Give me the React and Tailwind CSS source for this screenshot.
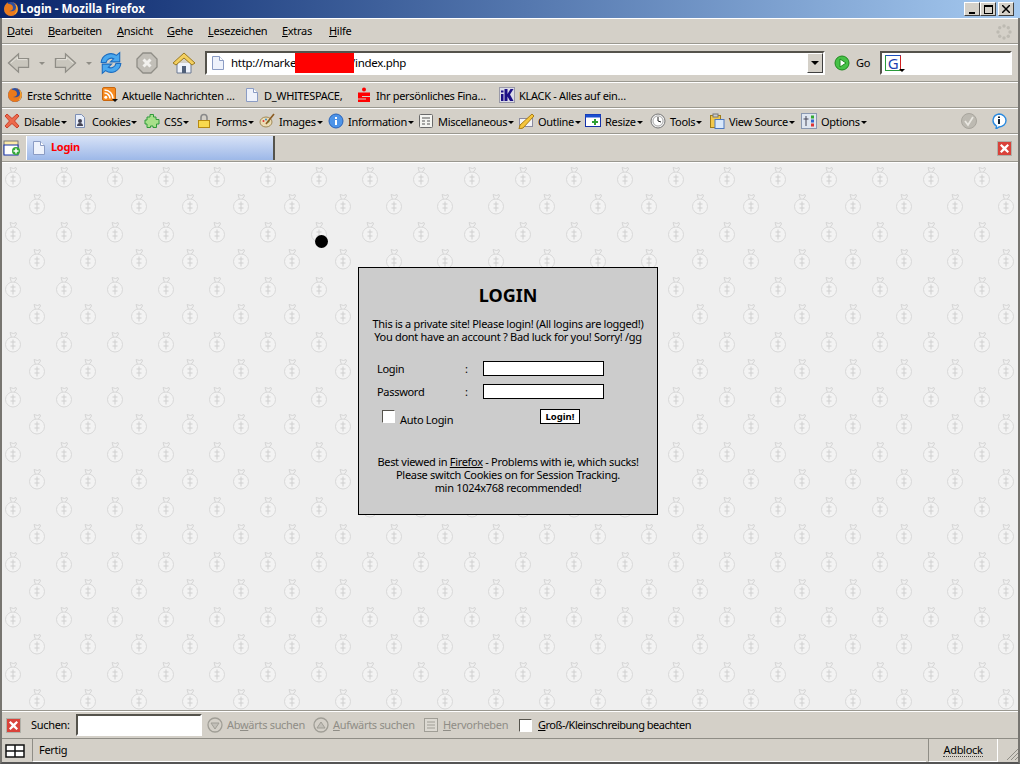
import React from 'react';

const font = { fontFamily: '"Noto Sans", "Open Sans", sans-serif' };

function Doc({ className = 'w-4 h-4' }) {
    return (
        <svg viewBox="0 0 16 16" className={className}>
            <path d="M2.500 1.500h7l4 4v9h-11z" fill="#eef2fb" stroke="#8b9cc4" />
            <path d="M9.500 1.500v4h4" fill="#fff" stroke="#8b9cc4" />
        </svg>
    );
}

function Firefox({ className = 'w-4 h-4' }) {
    return (
        <svg viewBox="0 0 16 16" className={className}>
            <circle cx="8" cy="8" r="7" fill="#2f4f9e" />
            <path d="M8 1a7 7 0 1 1-7 7c0-2 1-3 1-4 1 0 1-2 3-3-1 1 0 2 1 2 2 0 4 1 4 4 0 2-2 3-4 3 3 1 7 0 7-4 0-3-3-5-5-5z" fill="#ea7a1c" />
            <path d="M13 4c1 2 2 6-1 9" stroke="#f6b73c" fill="none" />
        </svg>
    );
}

function Rss() {
    return (
        <svg viewBox="0 0 16 16" className="w-4 h-4">
            <rect x="0.500" y="0.500" width="13" height="13" rx="1.500" fill="#f58a1f" stroke="#c9660d" />
            <circle cx="3.800" cy="10.200" r="1.500" fill="#fff" />
            <path d="M2.500 6a5.500 5.500 0 0 1 5.500 5.500M2.500 3a8.500 8.500 0 0 1 8.500 8.500" stroke="#fff" strokeWidth="1.600" fill="none" />
            <path d="M10 12h6l-3 3z" fill="#111" />
        </svg>
    );
}

function Sparkasse() {
    return (
        <svg viewBox="0 0 16 16" className="w-4 h-4">
            <circle cx="8" cy="2.500" r="2" fill="#f00" />
            <path d="M2 5.500h12v3.500H6v1h8v5H2v-2.500h8v-1H2z" fill="#f00" />
        </svg>
    );
}

function Klack() {
    return (
        <svg viewBox="0 0 16 16" className="w-4 h-4">
            <rect x="0.500" y="0.500" width="15" height="15" fill="#dcdce8" stroke="#9a9aa8" />
            <path d="M5.500 2h3v5l3-5h3l-3.500 5.500L14.500 14h-3.500L8.500 9.500V14h-3zM2 7h2.500v7H2zM2 3.500h2.500v2H2z" fill="#1c0f86" />
        </svg>
    );
}

function RedX({ className = 'w-4 h-4' }) {
    return (
        <svg viewBox="0 0 16 16" className={className}>
            <path d="M3 1l5 4.500L13 1l2 2-4.500 5L15 13l-2 2-5-4.500L3 15l-2-2 4.500-5L1 3z" fill="#ec6a4c" stroke="#c9402a" />
        </svg>
    );
}

function CloseBox() {
    return (
        <svg viewBox="0 0 15 15" className="w-[15px] h-[15px]">
            <rect x="0.500" y="0.500" width="14" height="14" fill="#d9423a" stroke="#b0b0a8" />
            <path d="M4.500 3l3 2.800L10.500 3 12 4.500 9.200 7.500 12 10.500 10.500 12 7.500 9.200 4.500 12 3 10.500 5.800 7.500 3 4.500z" fill="#fff" />
        </svg>
    );
}

const devIcons = {
    cookies: (
        <svg viewBox="0 0 16 16" className="w-4 h-4">
            <path d="M3.500 1.500h6l3 3v10h-9z" fill="#e8eefa" stroke="#7d8fb5" />
            <circle cx="8" cy="8" r="2" fill="#445" />
            <path d="M5 13c0-2 1-3 3-3s3 1 3 3z" fill="#445" />
        </svg>
    ),
    css: (
        <svg viewBox="0 0 16 16" className="w-4 h-4">
            <path d="M6 1.500h3.500v2.500H12v2.500h3V11h-2.500v3.500H9V13H6.500v1.500H3V11H1V7h2V4h3z" fill="#a8e08a" stroke="#2f9a3a" />
        </svg>
    ),
    forms: (
        <svg viewBox="0 0 16 16" className="w-4 h-4">
            <path d="M5 8V4.500a3 3 0 0 1 6 0V8" fill="none" stroke="#8a8a8a" strokeWidth="1.600" />
            <rect x="2.500" y="7.500" width="11" height="7" fill="#f9d94e" stroke="#b78a12" />
        </svg>
    ),
    images: (
        <svg viewBox="0 0 16 16" className="w-4 h-4">
            <ellipse cx="7" cy="9" rx="6" ry="5" fill="#ecdcb4" stroke="#a08a58" />
            <circle cx="4.500" cy="8" r="1" fill="#d33" />
            <circle cx="7" cy="6.500" r="1" fill="#38c" />
            <circle cx="9.500" cy="8.500" r="1" fill="#3a3" />
            <path d="M15 1L7 11" stroke="#8a5a20" strokeWidth="1.600" />
        </svg>
    ),
    info: (
        <svg viewBox="0 0 16 16" className="w-4 h-4">
            <circle cx="8" cy="8" r="7" fill="#4d94e8" stroke="#2a63b8" />
            <rect x="7" y="7" width="2" height="5" fill="#fff" />
            <rect x="7" y="4" width="2" height="2" fill="#fff" />
        </svg>
    ),
    misc: (
        <svg viewBox="0 0 16 16" className="w-4 h-4">
            <rect x="1.500" y="1.500" width="13" height="13" rx="1" fill="#f4f4f0" stroke="#6a6a6a" />
            <path d="M4 5h8M4 8h3M9 8h3M4 11h3M9 11h3" stroke="#555" />
        </svg>
    ),
    outline: (
        <svg viewBox="0 0 16 16" className="w-4 h-4">
            <rect x="1.500" y="5.500" width="13" height="8" fill="#f3f3f6" stroke="#8a8aa0" />
            <path d="M14 1l2 2-11 12-4 1 1-4z" fill="#f5c53c" stroke="#a87c14" />
        </svg>
    ),
    resize: (
        <svg viewBox="0 0 16 16" className="w-4 h-4">
            <rect x="0.500" y="1.500" width="15" height="12" fill="#fff" stroke="#1530a8" />
            <rect x="0.500" y="1.500" width="15" height="3" fill="#1a4fd0" />
            <path d="M9 6h2v2h2v2h-2v2H9v-2H7V8h2z" fill="#30a030" />
        </svg>
    ),
    tools: (
        <svg viewBox="0 0 16 16" className="w-4 h-4">
            <circle cx="8" cy="8" r="7" fill="#eeeeee" stroke="#777" />
            <circle cx="8" cy="8" r="5" fill="#fff" stroke="#aaa" />
            <path d="M8 4v4l3 1" stroke="#222" fill="none" />
        </svg>
    ),
    source: (
        <svg viewBox="0 0 16 16" className="w-4 h-4">
            <rect x="1.500" y="2.500" width="10" height="12" fill="#f2c84a" stroke="#a07c18" />
            <rect x="4" y="1" width="5" height="3" fill="#ccc" stroke="#777" />
            <rect x="6" y="6.500" width="9" height="9" fill="#d8e8fb" stroke="#4c78c0" />
        </svg>
    ),
    options: (
        <svg viewBox="0 0 16 16" className="w-4 h-4">
            <rect x="0.500" y="0.500" width="15" height="15" fill="#dfe6f0" stroke="#8a98b0" />
            <path d="M5 3v10M2.500 6h5" stroke="#445" />
            <rect x="10" y="2.500" width="3" height="3" fill="#3a3" />
            <rect x="10" y="6.500" width="3" height="3" fill="#36c" />
            <rect x="10" y="10.500" width="3" height="3" fill="#d33" />
        </svg>
    ),
};

const menus = [
    ['D', 'atei', 'w-[41px]'],
    ['B', 'earbeiten', 'w-[69px]'],
    ['A', 'nsicht', 'w-[50px]'],
    ['G', 'ehe', 'w-[41px]'],
    ['L', 'esezeichen', 'w-[74px]'],
    ['E', 'xtras', 'w-[47px]'],
    ['H', 'ilfe', 'w-[30px]'],
];

const bookmarks = [
    { icon: <Firefox />, label: 'Erste Schritte', width: 'w-[95px]' },
    { icon: <Rss />, label: 'Aktuelle Nachrichten …', width: 'w-[142px]' },
    { icon: <Doc />, label: 'D_WHITESPACE,', width: 'w-[112px]' },
    { icon: <Sparkasse />, label: 'Ihr persönliches Fina…', width: 'w-[143px]' },
    { icon: <Klack />, label: 'KLACK - Alles auf ein…', width: 'w-[150px]' },
];

const devItems = [
    { icon: <RedX />, label: 'Disable', width: 'w-[68px]' },
    { icon: devIcons.cookies, label: 'Cookies', width: 'w-[72px]' },
    { icon: devIcons.css, label: 'CSS', width: 'w-[52px]' },
    { icon: devIcons.forms, label: 'Forms', width: 'w-[63px]' },
    { icon: devIcons.images, label: 'Images', width: 'w-[69px]' },
    { icon: devIcons.info, label: 'Information', width: 'w-[90px]' },
    { icon: devIcons.misc, label: 'Miscellaneous', width: 'w-[100px]' },
    { icon: devIcons.outline, label: 'Outline', width: 'w-[67px]' },
    { icon: devIcons.resize, label: 'Resize', width: 'w-[65px]' },
    { icon: devIcons.tools, label: 'Tools', width: 'w-[59px]' },
    { icon: devIcons.source, label: 'View Source', width: 'w-[92px]' },
    { icon: devIcons.options, label: 'Options', width: 'w-[70px]' },
];

function Caret() {
    return <span className="ml-px mt-[1px] h-0 w-0 border-x-[3px] border-t-[3px] border-x-transparent border-t-black" />;
}

function WinButton({ children, className = '' }) {
    return (
        <div className={`flex h-[14px] w-[16px] items-center justify-center border border-t-white border-l-white border-r-[#404040] border-b-[#404040] bg-[#d4d0c8] ${className}`}>
            {children}
        </div>
    );
}

function Arrow({ flip }) {
    return (
        <svg viewBox="0 0 24 22" className={`h-[22px] w-[23px] ${flip ? '-scale-x-100' : ''}`}>
            <path d="M1.500 11L12 1.500V6.500H22.500V15.500H12V20.500z" fill="#c9c6bd" stroke="#8f8d86" strokeWidth="1.300" />
            <path d="M4 11L11 5v2.500h10" fill="none" stroke="#e6e4dd" />
        </svg>
    );
}

function Sep() {
    return <div className="h-[2px] border-t border-t-[#9a9890] border-b border-b-white" />;
}

function MoneyBags() {
    return (
        <svg className="absolute inset-0 h-full w-full" aria-hidden="true">
            <defs>
                <g id="bag">
                    <path d="M5 1.500l3.500 1 2.500-1 .500 1.500-2.500 3.500h-2.500z" fill="#f0f0f0" stroke="#d4d4d4" />
                    <circle cx="8" cy="13.500" r="7.500" fill="#f3f3f3" stroke="#d8d8d8" />
                    <path d="M8 8.500v10M5.500 11h5M5.500 15h5" stroke="#cfcfcf" />
                </g>
                <pattern id="bags" x="3" y="3" width="51" height="55" patternUnits="userSpaceOnUse">
                    <use href="#bag" x="0" y="0" />
                    <use href="#bag" x="24" y="27" />
                </pattern>
            </defs>
            <rect width="100%" height="100%" fill="url(#bags)" />
        </svg>
    );
}

function LoginBox() {
    return (
        <div className="relative ml-[356px] mt-[104px] h-[248px] w-[300px] border border-black bg-[#cccccc] text-[11px] leading-[13px] text-black">
            <h1 className="mt-[17px] text-center text-[18px] font-bold leading-[20px] tracking-normal">LOGIN</h1>
            <p className="mt-[12px] text-center">
                This is a private site! Please login! (All logins are logged!)
                <br />
                You dont have an account ? Bad luck for you! Sorry! /gg
            </p>
            <div className="mt-[18px] ml-[18px] flex h-[15px] items-center">
                <span className="w-[88px]">Login</span>
                <span className="w-[18px]">:</span>
                <div className="h-[15px] w-[121px] border border-black bg-white" />
            </div>
            <div className="mt-[8px] ml-[18px] flex h-[15px] items-center">
                <span className="w-[88px]">Password</span>
                <span className="w-[18px]">:</span>
                <div className="h-[15px] w-[121px] border border-black bg-white" />
            </div>
            <div className="mt-[10px] ml-[23px] flex h-[15px] items-center">
                <div className="h-[13px] w-[13px] border border-t-[#55534c] border-l-[#55534c] border-r-white border-b-white bg-white" />
                <span className="ml-[5px] mt-[5px] w-[140px]">Auto Login</span>
                <div className="flex h-[15px] w-[40px] items-center justify-center border border-black bg-white text-[9.500px] font-bold tracking-normal">
                    Login!
                </div>
            </div>
            <p className="mt-[31px] text-center">
                Best viewed in <span className="underline">Firefox</span> - Problems with ie, which sucks!
                <br />
                Please switch Cookies on for Session Tracking.
                <br />
                min 1024x768 recommended!
            </p>
        </div>
    );
}

export default function App() {
    return (
        <div style={font} className="flex h-[764px] w-[1020px] flex-col overflow-hidden bg-[#d4d0c8] text-[11px] tracking-[-0.3px] text-black">
            <div className="flex h-[18px] shrink-0 items-center justify-between bg-gradient-to-r from-[#0a246a] to-[#a6caf0] pl-[3px] pr-[6px]">
                <div className="flex items-center">
                    <Firefox />
                    <span className="ml-px text-[11.500px] font-bold tracking-normal text-white">Login - Mozilla Firefox</span>
                </div>
                <div className="flex items-center">
                    <WinButton><span className="mt-[7px] h-[2px] w-[6px] bg-black" /></WinButton>
                    <WinButton className="mr-[2px]"><span className="h-[9px] w-[9px] border border-t-2 border-black" /></WinButton>
                    <WinButton>
                        <svg viewBox="0 0 8 8" className="h-[8px] w-[8px]"><path d="M0 0l8 8M8 0l-8 8" stroke="#000" strokeWidth="1.500" /></svg>
                    </WinButton>
                </div>
            </div>

            <div className="flex min-h-0 flex-1 flex-col border-x-2 border-b-2 border-x-[#777570] border-b-[#555]">
                <div className="h-[2px] shrink-0 border-t border-white" />
                <div className="flex h-[23px] shrink-0 items-center pl-[5px] pr-[6px]">
                    {menus.map(([key, rest, width]) => (
                        <span key={rest} className={width}>
                            <span className="underline">{key}</span>
                            {rest}
                        </span>
                    ))}
                    <svg viewBox="0 0 16 16" className="ml-auto h-4 w-4">
                        <g fill="#bdbab2">
                            <circle cx="8" cy="2" r="1.700" />
                            <circle cx="12.300" cy="3.700" r="1.700" />
                            <circle cx="14" cy="8" r="1.700" />
                            <circle cx="12.300" cy="12.300" r="1.700" />
                            <circle cx="8" cy="14" r="1.700" />
                            <circle cx="3.700" cy="12.300" r="1.700" />
                            <circle cx="2" cy="8" r="1.700" />
                            <circle cx="3.700" cy="3.700" r="1.700" />
                        </g>
                    </svg>
                </div>
                <Sep />

                <div className="flex h-[36px] shrink-0 items-center pl-[5px] pr-[6px]">
                    <Arrow />
                    <span className="ml-[9px] h-0 w-0 border-x-[3px] border-t-[3px] border-x-transparent border-t-[#8f8d86]" />
                    <div className="ml-[9px]"><Arrow flip /></div>
                    <span className="ml-[9px] h-0 w-0 border-x-[3px] border-t-[3px] border-x-transparent border-t-[#8f8d86]" />
                    <svg viewBox="0 0 22 22" className="ml-[7px] h-[24px] w-[24px]">
                        <path d="M2 10.500a9 9 0 0 1 14-6.500l3-2.500v8.500h-8.500l3-3a5 5 0 0 0-7 3.500z" fill="#4aa8ee" stroke="#1b6cc0" />
                        <path d="M20 11.500a9 9 0 0 1-14 6.500l-3 2.500V12h8.500l-3 3a5 5 0 0 0 7-3.500z" fill="#4aa8ee" stroke="#1b6cc0" />
                    </svg>
                    <svg viewBox="0 0 22 22" className="ml-[13px] h-[22px] w-[22px]">
                        <path d="M7 1h8l6 6v8l-6 6H7l-6-6V7z" fill="#c2bfb8" stroke="#8f8d86" strokeWidth="1.300" />
                        <path d="M7.500 7.500l7 7M14.500 7.500l-7 7" stroke="#f2f1ee" strokeWidth="3" />
                    </svg>
                    <svg viewBox="0 0 24 24" className="ml-[14px] h-[24px] w-[24px]">
                        <path d="M5 12v10h14V12" fill="#eef2fa" stroke="#6a7892" />
                        <path d="M10 22v-7h4v7z" fill="#50607a" />
                        <path d="M12 2L1 12l3 2 8-7 8 7 3-2z" fill="#f3cf5f" stroke="#9a7a24" />
                    </svg>
                    <div className="relative ml-[9px] flex h-[24px] w-[620px] items-center border-2 border-t-[#55534c] border-l-[#55534c] border-r-white border-b-white bg-white">
                        <div className="ml-[3px]"><Doc /></div>
                        <span className="ml-[5px] w-[120px] whitespace-nowrap text-[11.500px]">http://market</span>
                        <span className="text-[11.500px]">/index.php</span>
                        <div className="absolute left-[88px] top-0 h-[20px] w-[59px] bg-[#ff0000]" />
                        <div className="absolute right-0 top-0 flex h-[20px] w-[16px] items-center justify-center border border-t-white border-l-white border-r-[#404040] border-b-[#404040] bg-[#d4d0c8]">
                            <span className="h-0 w-0 border-x-[4px] border-t-[4px] border-x-transparent border-t-black" />
                        </div>
                    </div>
                    <svg viewBox="0 0 16 16" className="ml-[9px] h-4 w-4">
                        <circle cx="8" cy="8" r="7" fill="#46c146" stroke="#1e8a1e" />
                        <path d="M6 4l6 4-6 4z" fill="#fff" stroke="#1e8a1e" />
                    </svg>
                    <span className="ml-[6px]">Go</span>
                    <div className="ml-auto flex h-[24px] w-[132px] items-center border-2 border-t-[#55534c] border-l-[#55534c] border-r-white border-b-white bg-white pl-[3px]">
                        <div className="relative flex h-[16px] w-[16px] items-center justify-center border border-t-[#1c4fc0] border-l-[#2a9a3a] border-r-[#d02020] border-b-[#2a9a3a] text-[15px] leading-none text-[#1c3fb0]">
                            G
                            <span className="absolute -right-[5px] bottom-[-2px] h-0 w-0 border-x-[3px] border-t-[3px] border-x-transparent border-t-black" />
                        </div>
                    </div>
                </div>
                <Sep />

                <div className="flex h-[24px] shrink-0 items-center pl-[5px]">
                    {bookmarks.map((item) => (
                        <div key={item.label} className={`flex items-center gap-[4px] ${item.width}`}>
                            {item.icon}
                            <span className="mt-[2px] whitespace-nowrap">{item.label}</span>
                        </div>
                    ))}
                </div>
                <Sep />

                <div className="flex h-[24px] shrink-0 items-center pl-[2px] pr-[11px]">
                    {devItems.map((item) => (
                        <div key={item.label} className={`flex items-center gap-[4px] ${item.width}`}>
                            {item.icon}
                            <span className="mt-[2px] flex items-center whitespace-nowrap">
                                {item.label}
                                <Caret />
                            </span>
                        </div>
                    ))}
                    <svg viewBox="0 0 16 16" className="ml-auto h-4 w-4">
                        <circle cx="8" cy="8" r="7.500" fill="#bdbab2" stroke="#a8a59d" />
                        <path d="M4 8l3 4 5-8" stroke="#e9e7e1" strokeWidth="1.800" fill="none" />
                    </svg>
                    <svg viewBox="0 0 16 16" className="ml-[14px] h-4 w-4">
                        <path d="M8 1a7 6.500 0 0 1 0 13l-3 2 .500-3A7 6.500 0 0 1 8 1z" fill="#fff" stroke="#2a8ae0" strokeWidth="1.400" />
                        <rect x="7" y="6" width="2" height="5" fill="#123" />
                        <rect x="7" y="3.500" width="2" height="1.500" fill="#123" />
                    </svg>
                </div>
                <Sep />

                <div className="flex h-[26px] shrink-0 items-center pr-[6px]">
                    <svg viewBox="0 0 18 18" className="ml-px h-[18px] w-[18px]">
                        <rect x="1" y="2" width="14" height="13" fill="#fbe9a8" stroke="#777" />
                        <rect x="1" y="6" width="14" height="10" fill="#fff" stroke="#1530a8" />
                        <circle cx="13" cy="12" r="4" fill="#35a83a" />
                        <path d="M13 9.500v5M10.500 12h5" stroke="#fff" strokeWidth="1.500" />
                    </svg>
                    <div className="ml-[5px] flex h-[24px] w-[249px] items-center gap-[4px] border-l border-l-white border-r-2 border-r-[#55534c] bg-gradient-to-b from-[#d8e2f6] to-[#9db8e8] pl-[4px] font-bold text-[#ff0000]">
                        <Doc />
                        <span className="mb-[2px]">Login</span>
                    </div>
                    <div className="ml-auto"><CloseBox /></div>
                </div>
                <Sep />

                <main className="relative min-h-0 flex-1 overflow-hidden bg-[#efefef]">
                    <MoneyBags />
                    <div className="absolute left-[313px] top-[72px] h-[13px] w-[13px] rounded-full bg-black" />
                    <div className="relative flex">
                        <LoginBox />
                    </div>
                </main>
                <Sep />

                <div className="flex h-[26px] shrink-0 items-center pl-[4px]">
                    <CloseBox />
                    <span className="ml-[10px] w-[45px]">Suchen:</span>
                    <div className="h-[22px] w-[126px] border-2 border-t-[#55534c] border-l-[#55534c] border-r-white border-b-white bg-white" />
                    <svg viewBox="0 0 16 16" className="ml-[5px] h-4 w-4">
                        <circle cx="8" cy="8" r="7" fill="#d4d0c8" stroke="#a09e96" strokeWidth="1.300" />
                        <path d="M4 6h8l-4 6z" fill="#c2bfb8" stroke="#a09e96" />
                    </svg>
                    <span className="ml-[4px] w-[83px] text-[#8f8d86]">Ab<span className="underline">w</span>ärts suchen</span>
                    <svg viewBox="0 0 16 16" className="ml-[3px] h-4 w-4">
                        <circle cx="8" cy="8" r="7" fill="#d4d0c8" stroke="#a09e96" strokeWidth="1.300" />
                        <path d="M4 11h8L8 5z" fill="#c2bfb8" stroke="#a09e96" />
                    </svg>
                    <span className="ml-[4px] w-[90px] text-[#8f8d86]"><span className="underline">A</span>ufwärts suchen</span>
                    <svg viewBox="0 0 16 16" className="h-4 w-4">
                        <rect x="1.500" y="1.500" width="13" height="13" fill="#dcd9d2" stroke="#a09e96" />
                        <path d="M4 5h8M4 8h8M4 11h8" stroke="#a09e96" />
                    </svg>
                    <span className="ml-[4px] w-[76px] text-[#8f8d86]"><span className="underline">H</span>ervorheben</span>
                    <div className="h-[13px] w-[13px] border border-t-[#55534c] border-l-[#55534c] border-r-white border-b-white bg-white" />
                    <span className="ml-[6px] tracking-[-0.5px]"><span className="underline">G</span>roß-/Kleinschreibung beachten</span>
                </div>

                <div className="flex h-[24px] shrink-0 items-stretch border-t border-t-[#8f8d86]">
                    <div className="flex w-[30px] items-center pl-[3px]">
                        <svg viewBox="0 0 20 14" className="h-[14px] w-[20px]">
                            <rect x="1" y="1" width="18" height="12" fill="#fff" stroke="#111" strokeWidth="1.500" />
                            <path d="M10 1v12M1 7h18" stroke="#111" strokeWidth="1.500" />
                        </svg>
                    </div>
                    <div className="flex flex-1 items-center border-l border-b border-l-[#8f8d86] border-b-white pl-[6px]">Fertig</div>
                    <div className="ml-[2px] flex w-[70px] items-center justify-center border-x border-b border-l-[#8f8d86] border-r-white border-b-white">
                        <span className="border-b border-dotted border-[#444] leading-[13px]">Adblock</span>
                    </div>
                    <div className="w-[20px]">
                        <svg viewBox="0 0 14 14" className="ml-[7px] mt-[8px] h-[14px] w-[14px]">
                            <path d="M13 2L2 13M13 6L6 13M13 10l-3 3" stroke="#8f8d86" />
                        </svg>
                    </div>
                </div>
            </div>
        </div>
    );
}
